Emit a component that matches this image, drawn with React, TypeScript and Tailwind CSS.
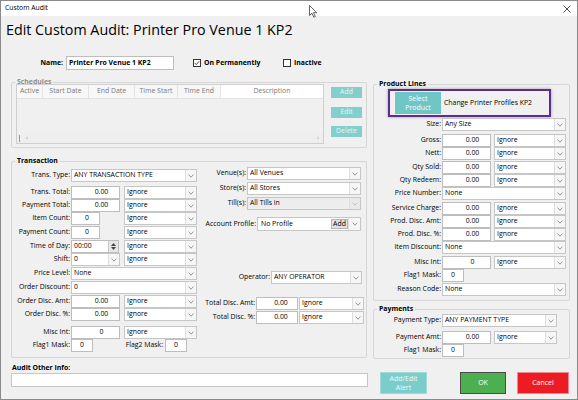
import React from 'react';

function Chevron({ light = false }: { light?: boolean }) {
  return (
    <svg width="6" height="4" viewBox="0 0 6 4" className="block">
      <path d="M0.6 0.6L3 3.2L5.4 0.6" fill="none" stroke={light ? '#b5b5b5' : '#7d7d7d'} strokeWidth="0.8" />
    </svg>
  );
}

function Label({ w, children, className = '' }: { w: string; children: React.ReactNode; className?: string }) {
  return <div className={`${w} shrink-0 text-right pr-[1px] whitespace-nowrap ${className}`}>{children}</div>;
}

function Input({ w, value, className = '' }: { w: string; value: string; className?: string }) {
  return (
    <div
      className={`${w} h-[13px] shrink-0 bg-white border border-[#bdbdbd] flex items-center justify-center leading-none ${className}`}
    >
      {value}
    </div>
  );
}

function Combo({ w, value, disabled = false, className = '' }: { w: string; value: string; disabled?: boolean; className?: string }) {
  return (
    <div className={`${w} h-[13px] shrink-0 flex border border-[#c6c6c6] ${disabled ? 'bg-[#ededed]' : 'bg-white'} ${className}`}>
      <div className="flex-1 pl-[2px] flex items-center leading-none whitespace-nowrap overflow-hidden">{value}</div>
      <div
        className={`w-[11px] flex items-center justify-center border-l border-[#dedede] ${disabled ? 'bg-[#e9e9e9]' : 'bg-[#f6f6f6]'}`}
      >
        <Chevron light={disabled} />
      </div>
    </div>
  );
}

function Row({ mt, children }: { mt: string; children: React.ReactNode }) {
  return <div className={`flex items-center h-[13px] ${mt}`}>{children}</div>;
}

function CheckBox({ checked }: { checked: boolean }) {
  return (
    <div className="w-[8px] h-[8px] border border-[#333] bg-white flex items-center justify-center">
      {checked && (
        <svg width="6" height="6" viewBox="0 0 6 6">
          <path d="M0.8 3.1L2.3 4.6L5.2 1.2" fill="none" stroke="#222" strokeWidth="0.8" />
        </svg>
      )}
    </div>
  );
}

const groupCls = 'border border-[#d6d6d6] rounded-[2px]';
const legendCls = 'ml-[3px] px-[2px] leading-[10px] font-bold';

export default function App() {
  return (
    <div className="relative w-[578px] h-[400px] bg-[#f0f0f0] border border-[#8a8a8a] text-black text-[6.9px] font-['Open_Sans',sans-serif] overflow-hidden">
      {/* title bar */}
      <div className="h-[15px] bg-white flex items-center justify-between pl-[4px] pr-[6px] text-[6.8px]">
        <span>Custom Audit</span>
        <svg width="8" height="8" viewBox="0 0 8 8">
          <path d="M0.5 0.5L7.5 7.5M7.5 0.5L0.5 7.5" stroke="#222" strokeWidth="0.8" />
        </svg>
      </div>

      {/* heading */}
      <div className="h-[28px] leading-[28px] pl-[5px] text-[14.3px]">Edit Custom Audit: Printer Pro Venue 1 KP2</div>

      {/* name row */}
      <div className="mt-[12px] h-[14px] flex items-center font-bold">
        <Label w="w-[63px]">Name:</Label>
        <div className="ml-[2px] w-[108px] h-[14px] bg-white border border-[#bdbdbd] flex items-center pl-[2px] leading-none">
          Printer Pro Venue 1 KP2
        </div>
        <div className="ml-[19px] w-[90px] flex items-center gap-[3px]">
          <CheckBox checked />
          <span>On Permanently</span>
        </div>
        <div className="flex items-center gap-[3px]">
          <CheckBox checked={false} />
          <span>Inactive</span>
        </div>
      </div>

      {/* main */}
      <div className="mt-[7px] flex items-start">
        {/* left column */}
        <div className="ml-[10px] w-[356px]">
          <fieldset className={`${groupCls} h-[71px]`}>
            <legend className={`${legendCls} text-[#8c8c8c]`}>Schedules</legend>
            <div className="flex -mt-[3px]">
              <div className="ml-[4px] w-[308px] h-[60px] border border-[#cfcfcf] bg-[#f0f0f0] flex flex-col text-[#7a7a7a]">
                <div className="h-[14px] flex bg-[#f7f7f7] border-b border-[#e2e2e2]">
                  <div className="w-[26px] flex items-center justify-center border-r border-[#e4e4e4]">Active</div>
                  <div className="w-[46px] flex items-center justify-center border-r border-[#e4e4e4]">Start Date</div>
                  <div className="w-[46px] flex items-center justify-center border-r border-[#e4e4e4]">End Date</div>
                  <div className="w-[43px] flex items-center justify-center border-r border-[#e4e4e4]">Time Start</div>
                  <div className="w-[43px] flex items-center justify-center border-r border-[#e4e4e4]">Time End</div>
                  <div className="flex-1 flex items-center justify-center bg-white">Description</div>
                </div>
                <div className="flex-1" />
                <div className="h-[10px] flex items-center justify-between px-[2px] text-[#a6a6a6] bg-[#eeeeee]">
                  <div className="flex items-center gap-[6px]">
                    <div className="w-[1px] h-[7px] bg-[#9a9a9a]" />
                    <span>‹</span>
                  </div>
                  <span className="pr-[2px]">›</span>
                </div>
              </div>
              <div className="ml-[7px] w-[31px] flex flex-col text-[#e6f6f5]">
                <div className="mt-[3px] h-[11px] bg-[#82cfcc] flex items-center justify-center">Add</div>
                <div className="mt-[9px] h-[11px] bg-[#82cfcc] flex items-center justify-center">Edit</div>
                <div className="mt-[8px] h-[11px] bg-[#82cfcc] flex items-center justify-center">Delete</div>
              </div>
            </div>
          </fieldset>

          <fieldset className={`${groupCls} mt-[8px] h-[202px]`}>
            <legend className={legendCls}>Transaction</legend>
            <div className="flex">
              {/* left sub-column */}
              <div className="w-[187px] shrink-0">
                <Row mt="mt-[3px]">
                  <Label w="w-[59px]">Trans. Type:</Label>
                  <Combo w="w-[126px]" value="ANY TRANSACTION TYPE" />
                </Row>
                <Row mt="mt-[4px]">
                  <Label w="w-[59px]">Trans. Total:</Label>
                  <Input w="w-[49px]" value="0.00" className="pl-[12px]" />
                  <Combo w="w-[73px]" value="Ignore" className="ml-[4px]" />
                </Row>
                <Row mt="mt-0">
                  <Label w="w-[59px]">Payment Total:</Label>
                  <Input w="w-[49px]" value="0.00" className="pl-[12px]" />
                  <Combo w="w-[73px]" value="Ignore" className="ml-[4px]" />
                </Row>
                <Row mt="mt-0">
                  <Label w="w-[59px]">Item Count:</Label>
                  <Input w="w-[29px]" value="0" className="pl-[3px]" />
                  <Combo w="w-[73px]" value="Ignore" className="ml-[24px]" />
                </Row>
                <Row mt="mt-[1px]">
                  <Label w="w-[59px]">Payment Count:</Label>
                  <Input w="w-[29px]" value="0" className="pl-[3px]" />
                  <Combo w="w-[73px]" value="Ignore" className="ml-[24px]" />
                </Row>
                <Row mt="mt-[1px]">
                  <Label w="w-[59px]">Time of Day:</Label>
                  <div className="w-[48px] h-[13px] bg-white border border-[#bdbdbd] flex">
                    <div className="flex-1 pl-[2px] flex items-center leading-none">00:00</div>
                    <div className="w-[10px] bg-[#e7e7e7] border-l border-[#c9c9c9] flex flex-col items-center justify-center gap-[1px]">
                      <svg width="5" height="3" viewBox="0 0 5 3">
                        <path d="M0 3L2.5 0L5 3Z" fill="#444" />
                      </svg>
                      <svg width="5" height="3" viewBox="0 0 5 3">
                        <path d="M0 0L2.5 3L5 0Z" fill="#444" />
                      </svg>
                    </div>
                  </div>
                  <Combo w="w-[73px]" value="Ignore" className="ml-[5px]" />
                </Row>
                <Row mt="mt-0">
                  <Label w="w-[59px]">Shift:</Label>
                  <Combo w="w-[49px]" value="0" />
                  <Combo w="w-[73px]" value="Ignore" className="ml-[4px]" />
                </Row>
                <Row mt="mt-[1px]">
                  <Label w="w-[59px]">Price Level:</Label>
                  <Combo w="w-[126px]" value="None" />
                </Row>
                <Row mt="mt-[1px]">
                  <Label w="w-[59px]">Order Discount:</Label>
                  <Combo w="w-[126px]" value="0" />
                </Row>
                <Row mt="mt-[1px]">
                  <Label w="w-[59px]">Order Disc. Amt:</Label>
                  <Input w="w-[49px]" value="0.00" className="pl-[12px]" />
                  <Combo w="w-[73px]" value="Ignore" className="ml-[4px]" />
                </Row>
                <Row mt="mt-0">
                  <Label w="w-[59px]">Order Disc. %:</Label>
                  <Input w="w-[49px]" value="0.00" className="pl-[12px]" />
                  <Combo w="w-[73px]" value="Ignore" className="ml-[4px]" />
                </Row>
                <Row mt="mt-[5px]">
                  <Label w="w-[59px]">Misc Int:</Label>
                  <Input w="w-[49px]" value="0" className="pl-[12px]" />
                  <Combo w="w-[73px]" value="Ignore" className="ml-[4px]" />
                </Row>
                <Row mt="mt-0">
                  <Label w="w-[59px]">Flag1 Mask:</Label>
                  <Input w="w-[22px]" value="0" />
                  <Label w="w-[72px]" className="pr-[2px]">
                    Flag2 Mask:
                  </Label>
                  <Input w="w-[22px]" value="0" />
                </Row>
              </div>

              {/* middle sub-column */}
              <div className="flex-1">
                <Row mt="mt-[1px]">
                  <Label w="w-[48px]">Venue(s):</Label>
                  <Combo w="w-[114px]" value="All Venues" />
                </Row>
                <Row mt="mt-[2px]">
                  <Label w="w-[48px]">Store(s):</Label>
                  <Combo w="w-[114px]" value="All Stores" />
                </Row>
                <Row mt="mt-[2px]">
                  <Label w="w-[48px]">Till(s):</Label>
                  <Combo w="w-[114px]" value="All Tills in" disabled />
                </Row>
                <div className="mt-[7px] h-[14px] flex items-center">
                  <Label w="w-[58px]">Account Profile:</Label>
                  <div className="w-[104px] h-[14px] bg-white border border-[#c6c6c6] flex">
                    <div className="flex-1 pl-[3px] flex items-center leading-none">No Profile</div>
                    <div className="my-[1px] w-[17px] bg-[#e1e1e1] border border-[#b5b5b5] flex items-center justify-center leading-none">
                      Add
                    </div>
                    <div className="w-[12px] flex items-center justify-center bg-[#f6f6f6] border-l border-[#dedede]">
                      <Chevron />
                    </div>
                  </div>
                </div>
                <Row mt="mt-[40px]">
                  <Label w="w-[72px]">Operator:</Label>
                  <Combo w="w-[91px]" value="ANY OPERATOR" />
                </Row>
                <Row mt="mt-[13px]">
                  <Label w="w-[57px]">Total Disc. Amt:</Label>
                  <Input w="w-[42px]" value="0.00" className="pl-[8px]" />
                  <Combo w="w-[65px]" value="Ignore" className="ml-[1px]" />
                </Row>
                <Row mt="mt-[1px]">
                  <Label w="w-[57px]">Total Disc. %:</Label>
                  <Input w="w-[42px]" value="0.00" className="pl-[8px]" />
                  <Combo w="w-[65px]" value="Ignore" className="ml-[1px]" />
                </Row>
              </div>
            </div>
          </fieldset>

          <div className="mt-[5px] leading-[10px] pl-[1px] font-bold">Audit Other Info:</div>
          <div className="mt-[0px] w-[357px] h-[14px] bg-white border border-[#c6c6c6]" />
        </div>

        {/* right column */}
        <div className="ml-[6px] w-[197px] mt-[2px]">
          <fieldset className={`${groupCls} h-[222px]`}>
            <legend className={legendCls}>Product Lines</legend>
            <div className="ml-[14px] mt-[0px] w-[163px] h-[28px] border-2 border-[#5c2d91] shadow-[0_0_3px_rgba(0,0,0,0.35)] flex items-center pl-[5px]">
              <div className="w-[46px] h-[22px] bg-[#6fc6c4] text-white flex flex-col items-center justify-center leading-[9px]">
                <span>Select</span>
                <span>Product</span>
              </div>
              <span className="ml-[3px]">Change Printer Profiles KP2</span>
            </div>
            <Row mt="mt-[1px]">
              <Label w="w-[68px]">Size:</Label>
              <Combo w="w-[124px]" value="Any Size" />
            </Row>
            <Row mt="mt-[3px]">
              <Label w="w-[68px]">Gross:</Label>
              <Input w="w-[49px]" value="0.00" className="pl-[12px]" />
              <Combo w="w-[72px]" value="Ignore" className="ml-[3px]" />
            </Row>
            <Row mt="mt-0">
              <Label w="w-[68px]">Nett:</Label>
              <Input w="w-[49px]" value="0.00" className="pl-[12px]" />
              <Combo w="w-[72px]" value="Ignore" className="ml-[3px]" />
            </Row>
            <Row mt="mt-[1px]">
              <Label w="w-[68px]">Qty Sold:</Label>
              <Input w="w-[49px]" value="0.00" className="pl-[12px]" />
              <Combo w="w-[72px]" value="Ignore" className="ml-[3px]" />
            </Row>
            <Row mt="mt-0">
              <Label w="w-[68px]">Qty Redeem:</Label>
              <Input w="w-[49px]" value="0.00" className="pl-[12px]" />
              <Combo w="w-[72px]" value="Ignore" className="ml-[3px]" />
            </Row>
            <Row mt="mt-0">
              <Label w="w-[68px]">Price Number:</Label>
              <Combo w="w-[124px]" value="None" />
            </Row>
            <Row mt="mt-[2px]">
              <Label w="w-[68px]">Service Charge:</Label>
              <Input w="w-[49px]" value="0.00" className="pl-[12px]" />
              <Combo w="w-[72px]" value="Ignore" className="ml-[3px]" />
            </Row>
            <Row mt="mt-0">
              <Label w="w-[68px]">Prod. Disc. Amt:</Label>
              <Input w="w-[49px]" value="0.00" className="pl-[12px]" />
              <Combo w="w-[72px]" value="Ignore" className="ml-[3px]" />
            </Row>
            <Row mt="mt-0">
              <Label w="w-[68px]">Prod. Disc. %:</Label>
              <Input w="w-[49px]" value="0.00" className="pl-[12px]" />
              <Combo w="w-[72px]" value="Ignore" className="ml-[3px]" />
            </Row>
            <Row mt="mt-0">
              <Label w="w-[68px]">Item Discount:</Label>
              <Combo w="w-[124px]" value="None" />
            </Row>
            <Row mt="mt-[2px]">
              <Label w="w-[68px]">Misc Int:</Label>
              <Input w="w-[49px]" value="0" className="pl-[12px]" />
              <Combo w="w-[72px]" value="Ignore" className="ml-[3px]" />
            </Row>
            <Row mt="mt-0">
              <Label w="w-[68px]">Flag1 Mask:</Label>
              <Input w="w-[22px]" value="0" />
            </Row>
            <Row mt="mt-[1px]">
              <Label w="w-[68px]">Reason Code:</Label>
              <Combo w="w-[124px]" value="None" />
            </Row>
          </fieldset>

          <fieldset className={`${groupCls} mt-[3px] h-[55px]`}>
            <legend className={legendCls}>Payments</legend>
            <Row mt="mt-0">
              <Label w="w-[68px]">Payment Type:</Label>
              <Combo w="w-[115px]" value="ANY PAYMENT TYPE" />
            </Row>
            <Row mt="mt-[4px]">
              <Label w="w-[68px]">Payment Amt:</Label>
              <Input w="w-[49px]" value="0.00" className="pl-[12px]" />
              <Combo w="w-[63px]" value="Ignore" className="ml-[3px]" />
            </Row>
            <Row mt="mt-0">
              <Label w="w-[68px]">Flag1 Mask:</Label>
              <Input w="w-[22px]" value="0" />
            </Row>
          </fieldset>

          <div className="mt-[13px] flex items-start text-[7px] text-white">
            <div className="ml-[7px] w-[47px] h-[22px] bg-[#7bcdcb] border border-[#9fdad8] flex flex-col items-center justify-center leading-[9px] text-[#eef9f9]">
              <span>Add/Edit</span>
              <span>Alert</span>
            </div>
            <div className="ml-[33px] w-[46px] h-[22px] bg-[#4caf50] border border-[#4a4a4a] flex items-center justify-center">
              OK
            </div>
            <div className="ml-[11px] w-[52px] h-[22px] bg-[#ed1c24] border border-[#f08a8e] flex items-center justify-center">
              Cancel
            </div>
          </div>
        </div>
      </div>

      {/* mouse pointer */}
      <svg className="absolute left-[308px] top-[4px]" width="9" height="13" viewBox="0 0 9 13">
        <path d="M0.5 0.5L0.5 10.5L3 8.3L4.8 12.2L6.3 11.5L4.5 7.7L7.8 7.7Z" fill="#fff" stroke="#222" strokeWidth="0.7" />
      </svg>
    </div>
  );
}
